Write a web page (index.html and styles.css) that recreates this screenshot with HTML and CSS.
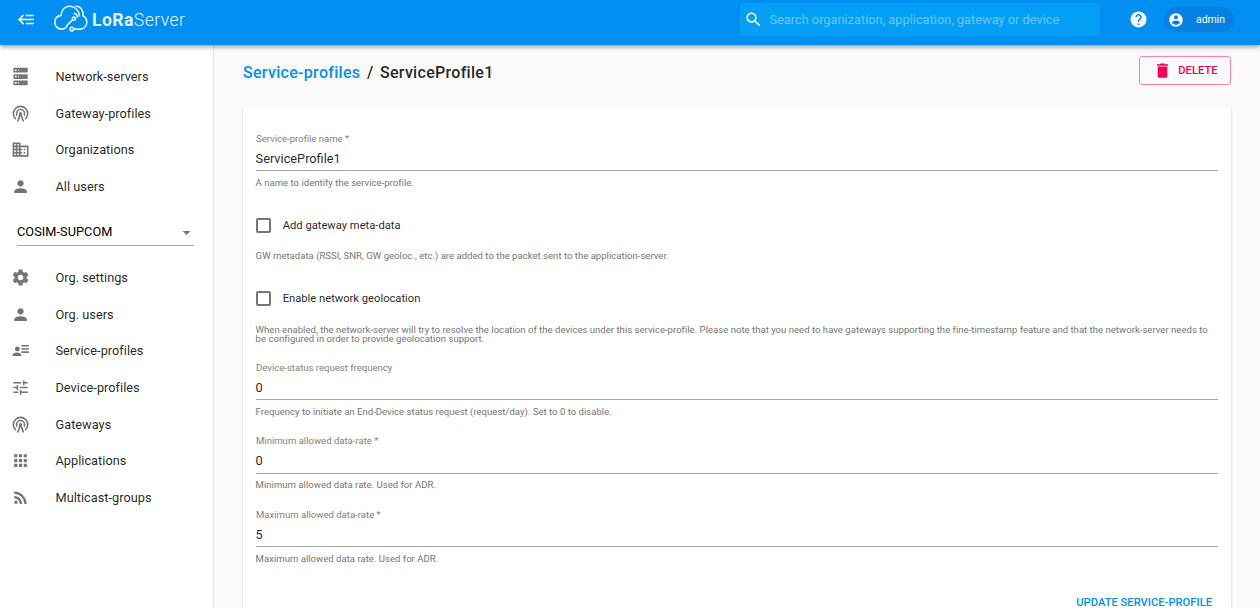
FILE: index.html
```html
<!DOCTYPE html>
<html lang="en">
<head>
<meta charset="utf-8">
<title>LoRa Server</title>
<link rel="stylesheet" href="styles.css">
</head>
<body>
<svg class="defs" aria-hidden="true">
  <symbol id="i-back" viewBox="0 0 24 24"><path d="M5,13L9,17L7.6,18.42L1.18,12L7.6,5.58L9,7L5,11H21V13H5M21,6V8H11V6H21M21,16V18H11V16H21Z"/></symbol>
  <symbol id="i-server" viewBox="0 0 24 24"><path d="M4,1H20A1,1 0 0,1 21,2V6A1,1 0 0,1 20,7H4A1,1 0 0,1 3,6V2A1,1 0 0,1 4,1M4,9H20A1,1 0 0,1 21,10V14A1,1 0 0,1 20,15H4A1,1 0 0,1 3,14V10A1,1 0 0,1 4,9M4,17H20A1,1 0 0,1 21,18V22A1,1 0 0,1 20,23H4A1,1 0 0,1 3,22V18A1,1 0 0,1 4,17M9,5H10V3H9V5M9,13H10V11H9V13M9,21H10V19H9V21M5,3V5H7V3H5M5,11V13H7V11H5M5,19V21H7V19H5Z"/></symbol>
  <symbol id="i-tower" viewBox="0 0 24 24"><path d="M12,10A2,2 0 0,1 14,12C14,12.5 13.82,12.94 13.53,13.29L16.7,22H14.57L12,14.93L9.43,22H7.3L10.47,13.29C10.18,12.94 10,12.5 10,12A2,2 0 0,1 12,10M12,8A4,4 0 0,0 8,12C8,12.5 8.1,13 8.28,13.46L7.4,15.86C6.53,14.81 6,13.47 6,12A6,6 0 0,1 12,6A6,6 0 0,1 18,12C18,13.47 17.47,14.81 16.6,15.86L15.72,13.46C15.9,13 16,12.5 16,12A4,4 0 0,0 12,8M12,4A8,8 0 0,0 4,12C4,14.36 5,16.5 6.64,17.94L5.92,19.94C3.54,18.11 2,15.23 2,12A10,10 0 0,1 12,2A10,10 0 0,1 22,12C22,15.23 20.46,18.11 18.08,19.94L17.36,17.94C19,16.5 20,14.36 20,12A8,8 0 0,0 12,4Z"/></symbol>
  <symbol id="i-domain" viewBox="0 0 24 24"><path d="M12 7V3H2v18h20V7H12zM6 19H4v-2h2v2zm0-4H4v-2h2v2zm0-4H4V9h2v2zm0-4H4V5h2v2zm4 12H8v-2h2v2zm0-4H8v-2h2v2zm0-4H8V9h2v2zm0-4H8V5h2v2zm10 12h-8v-2h2v-2h-2v-2h2v-2h-2V9h8v10zm-2-8h-2v2h2v-2zm0 4h-2v2h2v-2z"/></symbol>
  <symbol id="i-person" viewBox="0 0 24 24"><path d="M12 12c2.21 0 4-1.79 4-4s-1.79-4-4-4-4 1.79-4 4 1.79 4 4 4zm0 2c-2.67 0-8 1.34-8 4v2h16v-2c0-2.66-5.33-4-8-4z"/></symbol>
  <symbol id="i-settings" viewBox="0 0 24 24"><path d="M12,15.5A3.5,3.5 0 0,1 8.5,12A3.5,3.5 0 0,1 12,8.5A3.5,3.5 0 0,1 15.5,12A3.5,3.5 0 0,1 12,15.5M19.43,12.97C19.47,12.65 19.5,12.33 19.5,12C19.5,11.67 19.47,11.34 19.43,11L21.54,9.37C21.73,9.22 21.78,8.95 21.66,8.73L19.66,5.27C19.54,5.05 19.27,4.96 19.05,5.05L16.56,6.05C16.04,5.66 15.5,5.32 14.87,5.07L14.5,2.42C14.46,2.18 14.25,2 14,2H10C9.75,2 9.54,2.18 9.5,2.42L9.13,5.07C8.5,5.32 7.96,5.66 7.44,6.05L4.95,5.05C4.73,4.96 4.46,5.05 4.34,5.27L2.34,8.73C2.21,8.95 2.27,9.22 2.46,9.37L4.57,11C4.53,11.34 4.5,11.67 4.5,12C4.5,12.33 4.53,12.65 4.57,12.97L2.46,14.63C2.27,14.78 2.21,15.05 2.34,15.27L4.34,18.73C4.46,18.95 4.73,19.03 4.95,18.95L7.44,17.94C7.96,18.34 8.5,18.68 9.13,18.93L9.5,21.58C9.54,21.82 9.75,22 10,22H14C14.25,22 14.46,21.82 14.5,21.58L14.87,18.93C15.5,18.67 16.04,18.34 16.56,17.94L19.05,18.95C19.27,19.03 19.54,18.95 19.66,18.73L21.66,15.27C21.78,15.05 21.73,14.78 21.54,14.63L19.43,12.97Z"/></symbol>
  <symbol id="i-details" viewBox="0 0 24 24"><path d="M11 10C11 11.66 9.66 13 8 13C6.34 13 5 11.66 5 10C5 8.34 6.34 7 8 7C9.66 7 11 8.34 11 10M13 19H2V17.4C2 15.5 4.5 14.3 7.5 14.3C10.5 14.3 13 15.5 13 17.4M22.5 13V15H13V13M22.5 9V11H13V9M22.5 5V7H13V5Z"/></symbol>
  <symbol id="i-tune" viewBox="0 0 24 24"><path d="M3 17v2h6v-2H3zM3 5v2h10V5H3zm10 16v-2h8v-2h-8v-2h-2v6h2zM7 9v2H3v2h4v2h2V9H7zm14 4v-2H11v2h10zm-6-4h2V7h4V5h-4V3h-2v6z"/></symbol>
  <symbol id="i-apps" viewBox="0 0 24 24"><path d="M4 8h4V4H4v4zm6 12h4v-4h-4v4zm-6 0h4v-4H4v4zm0-6h4v-4H4v4zm6 0h4v-4h-4v4zm6-10v4h4V4h-4zm-6 4h4V4h-4v4zm6 6h4v-4h-4v4zm0 6h4v-4h-4v4z"/></symbol>
  <symbol id="i-rss" viewBox="0 0 24 24"><path d="M6.18,15.64A2.18,2.18 0 0,1 8.36,17.82C8.36,19 7.38,20 6.18,20C5,20 4,19 4,17.82A2.18,2.18 0 0,1 6.18,15.64M4,4.44A15.56,15.56 0 0,1 19.56,20H16.73A12.73,12.73 0 0,0 4,7.27V4.44M4,10.1A9.9,9.9 0 0,1 13.9,20H11.07A7.07,7.07 0 0,0 4,12.93V10.1Z"/></symbol>
  <symbol id="i-search" viewBox="0 0 24 24"><path d="M15.5 14h-.79l-.28-.27C15.41 12.59 16 11.11 16 9.5 16 5.91 13.09 3 9.5 3S3 5.91 3 9.5 5.91 16 9.5 16c1.61 0 3.09-.59 4.23-1.57l.27.28v.79l5 4.99L20.49 19l-4.99-5zm-6 0C7.01 14 5 11.99 5 9.5S7.01 5 9.5 5 14 7.01 14 9.5 11.99 14 9.5 14z"/></symbol>
  <symbol id="i-help" viewBox="0 0 24 24"><path d="M12 2C6.48 2 2 6.48 2 12s4.48 10 10 10 10-4.48 10-10S17.52 2 12 2zm1 17h-2v-2h2v2zm2.07-7.75l-.9.92C13.45 12.9 13 13.5 13 15h-2v-.5c0-1.1.45-2.1 1.17-2.83l1.24-1.26c.37-.36.59-.86.59-1.41 0-1.1-.9-2-2-2s-2 .9-2 2H8c0-2.21 1.79-4 4-4s4 1.79 4 4c0 .88-.36 1.68-.93 2.25z"/></symbol>
  <symbol id="i-account" viewBox="0 0 24 24"><path d="M12 2C6.48 2 2 6.48 2 12s4.48 10 10 10 10-4.48 10-10S17.52 2 12 2zm0 3c1.66 0 3 1.34 3 3s-1.34 3-3 3-3-1.34-3-3 1.34-3 3-3zm0 14.2c-2.5 0-4.71-1.28-6-3.22.03-1.99 4-3.08 6-3.08 1.99 0 5.97 1.09 6 3.08-1.29 1.94-3.5 3.22-6 3.22z"/></symbol>
  <symbol id="i-delete" viewBox="0 0 24 24"><path d="M6 19c0 1.1.9 2 2 2h8c1.1 0 2-.9 2-2V7H6v12zM19 4h-3.5l-1-1h-5l-1 1H5v2h14V4z"/></symbol>
  <symbol id="i-down" viewBox="0 0 24 24"><path d="M7 10l5 5 5-5z"/></symbol>
</svg>

<header class="topbar">
  <svg class="icon menu"><use href="#i-back"/></svg>
  <div class="logo">
    <svg class="cloud" viewBox="0 0 36 28">
      <path d="M19.6 14.9L14.6 19.6C13.6 22.8 11.8 24.1 8.8 24.1C4.7 24.1 1.8 21.2 1.8 17.3C1.8 13.4 4.4 10.9 8 10.4C8.2 4.8 11.9 1.2 16.6 1.2C19.6 1.2 22 2.4 24 4.8C25.6 6.6 26.4 8.8 26.6 11.6"/>
      <path d="M22.6 1C27.6 1.4 30.4 5 30.2 11C32.6 12.3 33.8 14.4 33.8 17.2C33.8 21.2 31 24.1 26.8 24.1H20.8"/>
      <path d="M20.8 8.4C23.1 8.6 24.3 10.1 24.5 12.6"/>
      <circle cx="20.9" cy="13.7" r="1.6"/><circle cx="18.9" cy="24.1" r="1.8"/>
    </svg>
    <span class="wordmark"><b>LoRa</b>Server</span>
  </div>
  <div class="search"><svg class="icon"><use href="#i-search"/></svg><span>Search organization, application, gateway or device</span></div>
  <svg class="icon help"><use href="#i-help"/></svg>
  <div class="chip"><svg class="icon"><use href="#i-account"/></svg><span>admin</span></div>
</header>

<div class="layout">
  <nav class="sidebar">
    <ul class="menu-list">
      <li><svg class="icon"><use href="#i-server"/></svg>Network-servers</li>
      <li><svg class="icon"><use href="#i-tower"/></svg>Gateway-profiles</li>
      <li><svg class="icon"><use href="#i-domain"/></svg>Organizations</li>
      <li><svg class="icon"><use href="#i-person"/></svg>All users</li>
    </ul>
    <div class="select"><span>COSIM-SUPCOM</span><svg class="icon"><use href="#i-down"/></svg></div>
    <ul class="menu-list">
      <li><svg class="icon"><use href="#i-settings"/></svg>Org. settings</li>
      <li><svg class="icon"><use href="#i-person"/></svg>Org. users</li>
      <li><svg class="icon"><use href="#i-details"/></svg>Service-profiles</li>
      <li><svg class="icon"><use href="#i-tune"/></svg>Device-profiles</li>
      <li><svg class="icon"><use href="#i-tower"/></svg>Gateways</li>
      <li><svg class="icon"><use href="#i-apps"/></svg>Applications</li>
      <li><svg class="icon"><use href="#i-rss"/></svg>Multicast-groups</li>
    </ul>
  </nav>

  <main class="content">
    <div class="title-bar">
      <h1><a>Service-profiles</a><span class="sep">/</span><span class="current">ServiceProfile1</span></h1>
      <button class="delete"><svg class="icon"><use href="#i-delete"/></svg><span>DELETE</span></button>
    </div>
    <form class="card">
      <div class="field">
        <label>Service-profile name *</label>
        <div class="value">ServiceProfile1</div>
        <p class="helper">A name to identify the service-profile.</p>
      </div>
      <div class="check-field">
        <div class="check"><i class="box"></i><span>Add gateway meta-data</span></div>
        <p class="helper">GW metadata (RSSI, SNR, GW geoloc., etc.) are added to the packet sent to the application-server.</p>
      </div>
      <div class="check-field">
        <div class="check"><i class="box"></i><span>Enable network geolocation</span></div>
        <p class="helper">When enabled, the network-server will try to resolve the location of the devices under this service-profile. Please note that you need to have gateways supporting the fine-timestamp feature and that the network-server needs to be configured in order to provide geolocation support.</p>
      </div>
      <div class="field">
        <label>Device-status request frequency</label>
        <div class="value">0</div>
        <p class="helper">Frequency to initiate an End-Device status request (request/day). Set to 0 to disable.</p>
      </div>
      <div class="field min-rate">
        <label>Minimum allowed data-rate *</label>
        <div class="value">0</div>
        <p class="helper">Minimum allowed data rate. Used for ADR.</p>
      </div>
      <div class="field">
        <label>Maximum allowed data-rate *</label>
        <div class="value">5</div>
        <p class="helper">Maximum allowed data rate. Used for ADR.</p>
      </div>
      <div class="actions"><span>UPDATE SERVICE-PROFILE</span></div>
    </form>
  </main>
</div>
</body>
</html>
```
FILE: styles.css
```css
* { box-sizing: border-box; }
html, body { height: 100%; }
body {
  margin: 0;
  display: flex;
  flex-direction: column;
  overflow: hidden;
  background: #fafafa;
  color: rgba(0, 0, 0, .87);
  font-family: Roboto, "Liberation Sans", sans-serif;
  font-size: 12.75px;
}
.defs { display: none; }
.icon { width: 19.1px; height: 19.1px; flex: none; fill: currentColor; }
h1, p, ul { margin: 0; padding: 0; }

.topbar {
  position: relative;
  z-index: 2;
  flex: none;
  height: 45px;
  padding: 0 26px 6px 17px;
  display: flex;
  align-items: center;
  background: #028ff2;
  color: #fff;
  box-shadow: 0 1.6px 3.2px -1px rgba(0, 0, 0, .2), 0 3.2px 4px rgba(0, 0, 0, .14), 0 1px 8px rgba(0, 0, 0, .12);
}
.logo { display: flex; align-items: center; margin-left: 17px; }
.cloud { width: 36px; height: 28px; margin-top: -1px; fill: none; stroke: #e6f4fe; stroke-width: 1.6; }
.wordmark { margin-left: 3px; margin-top: 1px; font-size: 17.6px; font-weight: 300; letter-spacing: .4px; color: #e6f4fe; }
.wordmark b { font-weight: 700; }
.search {
  display: flex;
  align-items: center;
  width: 360px;
  height: 33px;
  margin-left: auto;
  padding-left: 4px;
  border-radius: 3px;
  background: #039ff4;
}
.search span { margin-left: 6.4px; font-size: 12.75px; letter-spacing: .02px; color: rgba(255, 255, 255, .42); }
.help { margin-left: 29px; }
.chip {
  display: flex;
  align-items: center;
  width: 70px;
  height: 25px;
  margin-left: 16px;
  padding-left: 4.2px;
  border-radius: 13px;
  background: #0481e2;
  font-size: 10.4px;
}
.chip .icon { width: 16px; height: 16px; }
.chip span { margin-left: 11.8px; }

.layout { flex: 1; min-height: 0; display: flex; }
.sidebar {
  flex: none;
  width: 214px;
  padding-top: 13.2px;
  background: #fff;
  border-right: 1px solid #e2e2e2;
}
.menu-list { list-style: none; }
.menu-list li {
  display: flex;
  align-items: center;
  height: 36.66px;
  padding-left: 11px;
  gap: 25.4px;
  letter-spacing: .02px;
}
.menu-list .icon { color: #757575; }
.select {
  display: flex;
  align-items: center;
  justify-content: space-between;
  height: 28px;
  margin: 12.8px 19px 13.55px 17px;
  border-bottom: 1px solid #a9a9a9;
  color: #000;
  letter-spacing: .05px;
}
.select .icon { position: relative; top: 1px; color: #757575; margin-right: -2px; }

.content { flex: 1; min-width: 0; display: flex; flex-direction: column; padding: 11px 29px 0; }
.title-bar { flex: none; display: flex; justify-content: space-between; height: 51px; }
h1 { display: flex; height: 33px; align-items: center; font-size: 16px; font-weight: 500; letter-spacing: .3px; }
h1 a { color: #028ff2; }
h1 .sep { margin: 0 6.5px; }
.delete {
  display: flex;
  align-items: center;
  width: 92px;
  height: 29px;
  padding: 0 0 0 13px;
  border: 1px solid #ff80ab;
  border-radius: 3px;
  background: none;
  color: #f50057;
  font: 500 11.2px Roboto, sans-serif;
}
.delete span { margin-left: 6.2px; }
.card {
  flex: 1;
  min-height: 0;
  padding: 26px 13px 0;
  border-radius: 3px 3px 0 0;
  background: #fff;
  box-shadow: 0 1px 2.4px rgba(0, 0, 0, .2), 0 1px 1px rgba(0, 0, 0, .1);
}
.field { height: 73.4px; }
.field label { display: block; height: 12px; line-height: 12px; font-size: 9.56px; color: #808080; }
.value { height: 26px; margin-left: -.4px; padding-top: 4px; border-bottom: 1px solid #a9a9a9; line-height: 20px; }
.helper { margin-left: -.4px; padding-right: 6px; font-size: 9.56px; line-height: 9.56px; letter-spacing: .015px; color: #757575; }
.field .helper { padding-top: 7.1px; }
.min-rate .value { height: 26.6px; }
.min-rate .helper { padding-top: 6px; }
.check-field { height: 73.4px; }
.check { display: flex; align-items: center; height: 38px; font-size: 11.2px; }
.box { width: 15px; height: 15px; margin-right: 11.7px; border: 2px solid #757575; border-radius: 2px; }
.check-field .helper { padding-top: 6.9px; }
.check-field + .field { margin-top: 8.9px; }
.actions { display: flex; justify-content: flex-end; padding: 16.2px 6px 0 0; color: #028ff2; font-size: 11.2px; line-height: 9px; font-weight: 500; }
```
